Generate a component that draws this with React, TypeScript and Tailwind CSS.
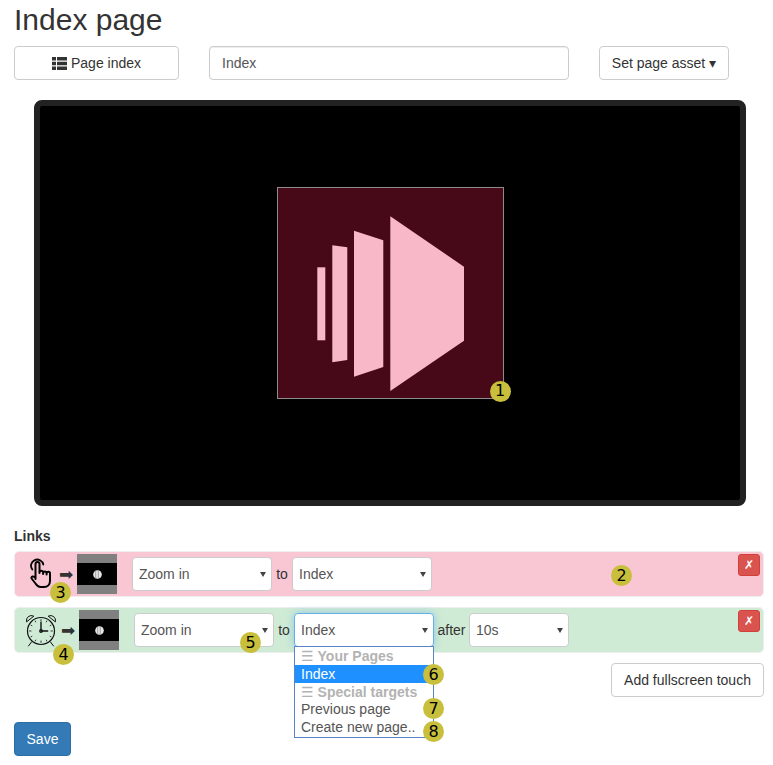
import type { ReactNode } from 'react';

const font = 'font-["Liberation_Sans",Arial,sans-serif]';

function Badge({ n, className }: { n: number; className: string }) {
  return (
    <span
      className={`absolute flex h-[21px] w-[21px] items-center justify-center rounded-full bg-[#c8bf3c] font-["DejaVu_Sans",sans-serif] text-[16px] leading-none text-black ${className}`}
    >
      {n}
    </span>
  );
}

function FakeSelect({ value, width, focus }: { value: string; width: string; focus?: boolean }) {
  return (
    <div
      className={`flex h-[34px] items-center justify-between rounded border bg-white pl-[6px] pr-[5px] text-[14px] text-[#555] ${width} ${
        focus ? 'border-[#66afe9] shadow-[0_0_8px_rgba(102,175,233,0.6)]' : 'border-[#ccc]'
      }`}
    >
      <span>{value}</span>
      <svg width="6" height="5" viewBox="0 0 6 5">
        <path d="M0 0h6L3 5z" fill="#444" />
      </svg>
    </div>
  );
}

function Thumb() {
  return (
    <div className="flex h-10 w-10 shrink-0 items-center justify-center bg-[#808080]">
      <div className="flex h-[22px] w-10 items-center justify-center bg-black">
        <svg width="9" height="9" viewBox="0 0 9 9">
          <circle cx="4.500" cy="4.500" r="4.300" fill="#e8e8e8" />
          <path d="M2.700.5v8M5.300.2v8.600" stroke="#8a8a8a" strokeWidth=".8" />
        </svg>
      </div>
    </div>
  );
}

function RemoveButton() {
  return (
    <button className="absolute right-[3px] top-[2px] flex h-[22px] w-[22px] items-center justify-center rounded-[3px] border border-[#d43f3a] bg-[#d9534f] font-['DejaVu_Sans',sans-serif] text-[12px] leading-none text-white">
      ✗
    </button>
  );
}

function LinkRow({ color, children }: { color: string; children: ReactNode }) {
  return (
    <div className={`relative flex h-[46px] items-center rounded-[5px] border border-[#eee] ${color}`}>
      {children}
      <RemoveButton />
    </div>
  );
}

function HandIcon() {
  return (
    <svg width="22" height="30" viewBox="0 0 22 30" fill="none" stroke="#000" strokeWidth="2" strokeLinecap="round" strokeLinejoin="round">
      <path d="M2.300 11.500A6.200 6.200 0 1 1 13.300 6.500" strokeWidth="1.800" />
      <path d="M5.500 21V6a2 2 0 0 1 4 0v9M9.500 14.500a1.800 1.800 0 0 1 3.600 0v1.500M13.100 15a1.800 1.800 0 0 1 3.500 0v1.500M16.600 15.500a1.700 1.700 0 0 1 3.400 0V23c0 3.500-2.500 6-6 6h-3.500c-2.500 0-3.700-1.500-5-3.500L1.600 20.500c-.8-2 2-3 3.900-.5" />
    </svg>
  );
}

function ClockIcon() {
  return (
    <svg width="34" height="34" viewBox="0 0 34 34" fill="none" stroke="#111" strokeWidth="1.200" strokeLinecap="round">
      <circle cx="17" cy="18" r="13.500" />
      <path d="M2.500 8.500a5 5 0 0 1 7-5.500zM31.500 8.500a5 5 0 0 0-7-5.500zM7.500 29l-3 4M26.500 29l3 4" strokeWidth="1" />
      <path d="M17 9.300V18h6.700" strokeWidth="1.400" />
      <circle cx="17" cy="18" r="1.300" />
      <path d="M17 6.500v1.500M17 28v1.500M5.500 18H7M27 18h1.500M11.200 8l.5.900M22.800 8l-.5.900M11.200 28l.5-.9M22.800 28l-.5-.9M7 12.200l.9.500M27 12.200l-.9.500M7 23.800l.9-.5M27 23.800l-.9-.5" strokeWidth=".8" />
    </svg>
  );
}

function Arrow({ className }: { className: string }) {
  return <span className={`font-['DejaVu_Sans',sans-serif] text-[17px] leading-none text-[#333] ${className}`}>➡</span>;
}

function ListIcon() {
  return (
    <svg width="15" height="13" viewBox="0 0 15 13" fill="#333">
      <path d="M0 0h4v3.500H0zM5 0h10v3.500H5zM0 4.700h4v3.500H0zM5 4.700h10v3.500H5zM0 9.400h4V13H0zM5 9.400h10V13H5z" />
    </svg>
  );
}

function GroupLabel({ children }: { children: string }) {
  return (
    <div className="flex h-[18px] items-center pl-[6px] font-bold leading-none text-[#b3b3b3]">
      <span className="mr-[4px] font-['DejaVu_Sans',sans-serif] font-bold">☰</span>
      {children}
    </div>
  );
}

export default function App() {
  return (
    <div className={`${font} min-h-[765px] bg-white pl-[14px] pr-[9px] text-[14px] text-[#333]`}>
      <h2 className="pt-[2px] text-[30px] leading-[36px] text-[#333]">Index page</h2>

      <div className="mt-[8px] flex items-center">
        <button className="flex h-[34px] w-[165px] items-center justify-center gap-[4px] rounded border border-[#ccc] bg-white">
          <ListIcon />
          Page index
        </button>
        <input
          readOnly
          value="Index"
          className="ml-[30px] h-[34px] w-[360px] rounded border border-[#ccc] px-3 text-[#555] shadow-[inset_0_1px_1px_rgba(0,0,0,0.075)] outline-none"
        />
        <button className="ml-[30px] h-[34px] w-[130px] rounded border border-[#ccc] bg-white">Set page asset ▾</button>
      </div>

      {/* preview screen */}
      <div className="ml-[20px] mt-[20px] flex h-[406px] w-[712px] items-center justify-center rounded-[8px] border-[6px] border-[#222] bg-black">
        <div className="relative mb-[21px] flex h-[212px] w-[227px] items-center justify-center border border-[#8c8c8c] bg-[#470817]">
          <svg width="225" height="210" viewBox="0 0 225 210">
            <g fill="#f8b8c8">
              <path d="M39.300 79.300h8v73h-8z" />
              <path d="M54.300 57.300l15 2V172l-15 2.300z" />
              <path d="M76 42.700l29.300 9.600V179L76 188.700z" />
              <path d="M112.300 28.300L186 78.700v74L112.300 203z" />
            </g>
          </svg>
          <Badge n={1} className="bottom-[-4px] right-[-8px]" />
        </div>
      </div>

      <div className="mt-[20px] font-bold leading-[20px]">Links</div>

      <div className="mt-[5px] flex flex-col gap-[10px]">
        <LinkRow color="bg-[#f9c6d3]">
          <div className="mb-[2px] ml-[12px] flex w-[27px] justify-center">
            <HandIcon />
          </div>
          <Arrow className="ml-[5px] w-[14px]" />
          <div className="ml-[4px]">
            <Thumb />
          </div>
          <div className="ml-[15px]">
            <FakeSelect value="Zoom in" width="w-[140px]" />
          </div>
          <span className="w-[20px] text-center">to</span>
          <FakeSelect value="Index" width="w-[140px]" />
          <Badge n={3} className="left-[35px] top-[30px]" />
          <Badge n={2} className="left-[596px] top-[13px]" />
        </LinkRow>

        <LinkRow color="bg-[#cfebd5]">
          <div className="ml-[9px] flex w-[34px] justify-center">
            <ClockIcon />
          </div>
          <Arrow className="ml-[3px] w-[14px]" />
          <div className="ml-[4px]">
            <Thumb />
          </div>
          <div className="ml-[15px]">
            <FakeSelect value="Zoom in" width="w-[140px]" />
          </div>
          <span className="w-[20px] text-center">to</span>
          <FakeSelect value="Index" width="w-[140px]" focus />
          <span className="w-[35px] text-center">after</span>
          <FakeSelect value="10s" width="w-[100px]" />
          <Badge n={4} className="left-[38px] top-[36px]" />
          <Badge n={5} className="left-[225px] top-[24px]" />

          {/* open dropdown */}
          <div className="absolute left-[279px] top-[38px] z-10 w-[140px] border border-[#5b84c4] bg-white pb-[1px] text-[#555]">
            <GroupLabel>Your Pages</GroupLabel>
            <div className="bg-[#1e90ff] pl-[6px] leading-[18px] text-white">Index</div>
            <GroupLabel>Special targets</GroupLabel>
            <div className="pl-[6px] leading-[17px]">Previous page</div>
            <div className="pl-[6px] leading-[18px]">Create new page..</div>
            <Badge n={6} className="left-[128px] top-[17px]" />
            <Badge n={7} className="left-[128px] top-[51px]" />
            <Badge n={8} className="left-[128px] top-[74px]" />
          </div>
        </LinkRow>
      </div>

      <div className="mt-[10px] flex justify-end">
        <button className="h-[34px] w-[153px] rounded border border-[#ccc] bg-white">Add fullscreen touch</button>
      </div>

      <button className="mt-[25px] h-[34px] w-[57px] rounded border border-[#2e6da4] bg-[#337ab7] text-white">Save</button>
    </div>
  );
}
